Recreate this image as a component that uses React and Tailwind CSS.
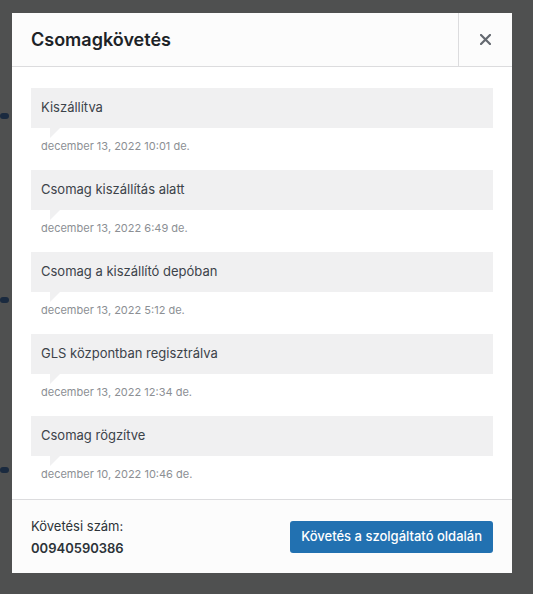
const events = [
  { title: "Kiszállítva", date: "december 13, 2022 10:01 de." },
  { title: "Csomag kiszállítás alatt", date: "december 13, 2022 6:49 de." },
  { title: "Csomag a kiszállító depóban", date: "december 13, 2022 5:12 de." },
  { title: "GLS központban regisztrálva", date: "december 13, 2022 12:34 de." },
  { title: "Csomag rögzítve", date: "december 10, 2022 10:46 de." },
];

function TrackingEvent({ title, date }) {
  return (
    <li className="mb-[16px]">
      <div className="relative flex h-[40px] items-center bg-[#f0f0f1] px-[10px] text-[13px] text-[#3c434a]">
        {title}
        <span className="absolute left-[19px] top-full h-0 w-0 border-r-[10px] border-t-[10px] border-r-transparent border-t-[#f0f0f1]" />
      </div>
      <p className="pl-[10px] pt-[10px] text-[11px] leading-[16px] text-[#8c8f94]">{date}</p>
    </li>
  );
}

export default function App() {
  return (
    <div
      className="relative min-h-[594px] w-full overflow-hidden bg-[#4f5050] pl-[12px] pt-[13px]"
      style={{ fontFamily: "Inter, 'Liberation Sans', sans-serif" }}
    >
      {/* page behind the overlay */}
      <span className="absolute left-0 top-[113px] h-[6px] w-[9px] rounded-full bg-[#1a2a3f]" />
      <span className="absolute left-0 top-[297px] h-[6px] w-[9px] rounded-full bg-[#1a2a3f]" />
      <span className="absolute left-0 top-[467px] h-[6px] w-[9px] rounded-full bg-[#1a2a3f]" />

      <div className="relative flex h-[560px] w-[500px] flex-col bg-white">
        <header className="flex h-[54px] items-stretch border-b border-[#dcdcde] bg-[#fcfcfc]">
          <h1 className="flex flex-1 items-center pl-[19px] text-[18px] font-semibold text-[#1d2327]">
            Csomagkövetés
          </h1>
          <button className="flex w-[54px] items-center justify-center border-l border-[#dcdcde] text-[#646970]">
            <svg width="11" height="11" viewBox="0 0 11 11">
              <path d="M1 1 L10 10 M10 1 L1 10" stroke="currentColor" strokeWidth="2.2" strokeLinecap="square" />
            </svg>
          </button>
        </header>

        <ul className="flex-1 px-[19px] pt-[21px]">
          {events.map((event) => (
            <TrackingEvent key={event.title} {...event} />
          ))}
        </ul>

        <footer className="flex h-[74px] items-center justify-between border-t border-[#dcdcde] bg-[#fcfcfc] px-[19px]">
          <div className="text-[13px] text-[#2c3338]">
            <p className="leading-[22px]">Követési szám:</p>
            <p className="font-semibold leading-[22px]">00940590386</p>
          </div>
          <button className="h-[32px] rounded-[3px] bg-[#2271b1] px-[11px] text-[13px] font-medium text-white">
            Követés a szolgáltató oldalán
          </button>
        </footer>
      </div>
    </div>
  );
}
